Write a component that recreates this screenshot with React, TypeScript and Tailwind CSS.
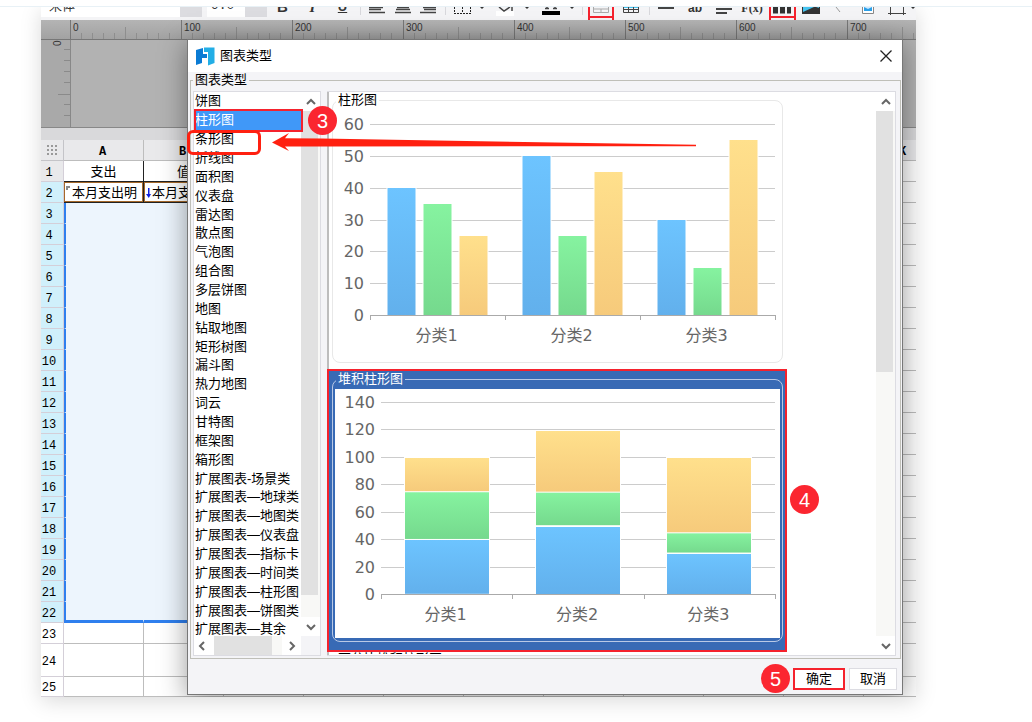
import type { ReactNode } from "react";

const CHART_TYPES = [
  "饼图", "柱形图", "条形图", "折线图", "面积图", "仪表盘", "雷达图", "散点图", "气泡图", "组合图",
  "多层饼图", "地图", "钻取地图", "矩形树图", "漏斗图", "热力地图", "词云", "甘特图", "框架图", "箱形图",
  "扩展图表-场景类", "扩展图表—地球类", "扩展图表—地图类", "扩展图表—仪表盘", "扩展图表—指标卡",
  "扩展图表—时间类", "扩展图表—柱形图", "扩展图表—饼图类", "扩展图表—其余",
];

const COLUMNS = ["A", "B", "C", "D", "E", "F", "G", "H", "I", "J", "K"];
const CATEGORIES = ["分类1", "分类2", "分类3"];
const FILLS = ["url(#blue)", "url(#green)", "url(#yellow)"];
const DATA = [
  [40, 35, 25],
  [50, 25, 45],
  [30, 15, 55],
];

function Tool({ label, className, children }: { label: string; className: string; children: ReactNode }) {
  return (
    <button type="button" aria-label={label} className={`flex h-[13px] shrink-0 items-end justify-center ${className}`}>
      {children}
    </button>
  );
}

function Icon({ w, children }: { w: number; children: ReactNode }) {
  return (
    <svg width={w} height="13" viewBox={`0 0 ${w} 13`} fill="none" stroke="#444" className="shrink-0">
      {children}
    </svg>
  );
}

function Caret() {
  return (
    <Icon w={6}>
      <path d="M1 0h4L3 2z" fill="#333" stroke="none" />
    </Icon>
  );
}

function Separator({ className }: { className: string }) {
  return (
    <span className={`flex h-[13px] shrink-0 justify-center ${className}`}>
      <span className="h-2 w-px bg-[#d8d8dc]" />
    </span>
  );
}

function Toolbar() {
  return (
    <div className="flex h-[13px] items-end overflow-hidden bg-[#f4f4f6] text-[#333]">
      <button type="button" aria-label="字体" className="mb-[3px] flex h-5 shrink-0 text-[13px] leading-[17px]">
        <span className="h-5 w-[139px] bg-white pl-2 text-left">宋体</span>
        <span className="flex h-5 w-[22px] items-center justify-center bg-[#dcdce0]">
          <Caret />
        </span>
      </button>
      <button type="button" aria-label="字号" className="mb-[3px] ml-[5px] flex h-5 shrink-0 font-['Liberation_Mono',monospace] text-[13px] leading-[17px]">
        <span className="h-5 w-[38px] bg-white pl-1 text-left">9.0</span>
        <span className="flex h-5 w-[22px] items-center justify-center bg-[#dcdce0]">
          <Caret />
        </span>
      </button>
      <Tool label="加粗" className="w-[31px]">
        <span className="pb-[5px] text-[15px] leading-4 font-bold">B</span>
      </Tool>
      <Tool label="斜体" className="w-[29px]">
        <span className="pb-[5px] font-['Liberation_Serif',serif] text-[15px] leading-4 font-bold italic">I</span>
      </Tool>
      <Tool label="下划线" className="w-[31px]">
        <span className="pb-[5px] text-[13px] leading-4 font-bold underline">U</span>
      </Tool>
      <Separator className="w-1" />
      <Tool label="左对齐" className="w-[29px]">
        <Icon w={16}><path d="M0 .5h14M0 2.500h12M0 5.500h16" strokeWidth="1.500" /></Icon>
      </Tool>
      <Tool label="居中" className="w-6">
        <Icon w={16}><path d="M2 .5h12M1 2.500h14M0 5.500h16" strokeWidth="1.500" /></Icon>
      </Tool>
      <Tool label="右对齐" className="w-[26px]">
        <Icon w={16}><path d="M3 .5h13M4 2.500h12M0 5.500h16" strokeWidth="1.500" /></Icon>
      </Tool>
      <Separator className="w-[9px]" />
      <Tool label="边框" className="w-[25px]">
        <Icon w={17}>
          <path d="M.5 0v6M8.500 0v6M16.500 0v6M0 6.500h17" stroke="#222" strokeDasharray="2 1" />
        </Icon>
      </Tool>
      <Tool label="边框选项" className="w-[14px]"><Caret /></Tool>
      <Tool label="填充颜色" className="w-8">
        <Icon w={18}>
          <path d="M0 4h18v5H0z" fill="#fff" stroke="none" />
          <path d="M3 0l5 4 6-4M16 0v4" strokeWidth="1.500" />
        </Icon>
      </Tool>
      <Tool label="填充选项" className="w-3"><Caret /></Tool>
      <Tool label="字体颜色" className="w-[35px]">
        <Icon w={18}>
          <path d="M0 4h18v4H0z" fill="#000" stroke="none" />
          <path d="M5 0v2M13 0v2M3 1.500h4M11 1.500h4" strokeWidth="1.500" />
        </Icon>
      </Tool>
      <Tool label="颜色选项" className="w-2"><Caret /></Tool>
      <Separator className="w-3" />
      <Tool label="合并单元格" className="w-[26px] border-x-2 border-[#f5222d]">
        <Icon w={22}>
          <path d="M3.500 0v5.500h15V0M3 2h15M11 2v3" stroke="#aaa" />
          <path d="M0 10h22" stroke="#f5222d" strokeWidth="2" />
        </Icon>
      </Tool>
      <Tool label="表格" className="w-[33px]">
        <Icon w={16}>
          <path d="M1 0h14v1H1z" fill="#45c4f0" stroke="none" />
          <path d="M.5 0v5.500h15V0M0 2.500h16M5.500 0v5M10.500 0v5" />
        </Icon>
      </Tool>
      <Separator className="w-1" />
      <Tool label="分割线" className="w-[29px]">
        <Icon w={16}><path d="M0 1h16" strokeWidth="2" /></Icon>
      </Tool>
      <Tool label="文本" className="w-[30px]">
        <span className="pb-1 text-[12px] leading-4 font-bold">ab</span>
      </Tool>
      <Tool label="段落" className="w-[27px]">
        <Icon w={16}><path d="M0 2h16M0 6h11" strokeWidth="2" /></Icon>
      </Tool>
      <Tool label="公式" className="w-[30px]">
        <span className="pb-1 font-['Liberation_Serif',serif] text-[12px] leading-4 font-bold">F(x)</span>
      </Tool>
      <Tool label="插入图表" className="ml-0.5 w-[27px] border-x-2 border-[#f5222d]">
        <Icon w={23}>
          <path d="M2 0h5v6.500H2zM9 0h5v6.500H9zM16 0h4v6.500h-4z" fill="#333" stroke="none" />
          <path d="M0 10h23" stroke="#f5222d" strokeWidth="2" />
        </Icon>
      </Tool>
      <Tool label="图片" className="w-[30px]">
        <Icon w={18}>
          <path d="M0 0h18v7H0z" fill="#333" stroke="none" />
          <path d="M1 0h11L1 5z" fill="#45c4f0" stroke="none" />
          <path d="M14 0h3v1z" fill="#45c4f0" stroke="none" />
        </Icon>
      </Tool>
      <Tool label="斜线" className="w-[26px]">
        <Icon w={8}><path d="M1 0l4 5" stroke="#999" /></Icon>
      </Tool>
      <Tool label="子报表" className="w-8">
        <Icon w={14}>
          <path d="M1.500 0v6.500h11V0" stroke="#888" fill="#fff" />
          <path d="M3 0h8v4H3z" fill="#2a9fe8" stroke="none" />
          <path d="M3 0l4 2 4-2" fill="#cfeaff" stroke="none" />
        </Icon>
      </Tool>
      <Tool label="悬浮元素" className="w-[26px]">
        <Icon w={18}><path d="M2.500 0v8M15.500 0v8M0 6.500h18" /></Icon>
      </Tool>
      <Tool label="更多" className="w-1.5"><Caret /></Tool>
    </div>
  );
}

function HorizontalRuler() {
  return (
    <div className="flex h-5 overflow-hidden border-b border-[#777] bg-[#ababab] bg-linear-to-b from-[#b4b4b4] to-[#a2a2a2] pl-[29px] text-[10px] leading-[15px] text-[#333]">
      {[0, 100, 200, 300, 400, 500, 600, 700].map((n) => (
        <div key={n} className="relative h-full w-[111px] shrink-0 border-l border-[#777] pl-0.5">
          {n}
          <svg width="111" height="19" className="absolute inset-0" stroke="#8e8e8e">
            {[1, 2, 3, 4, 5, 6, 7, 8, 9].map((t) => (
              <line key={t} x1={t * 11 - 0.5} x2={t * 11 - 0.5} y1={t === 5 ? 7 : 13} y2="19" />
            ))}
          </svg>
        </div>
      ))}
    </div>
  );
}

function Canvas() {
  return (
    <div className="flex h-[88px] border-b border-[#888]">
      <div className="w-[29px] bg-[#a9a9a9]">
        <svg width="29" height="87" stroke="#8a8a8a">
          {[10, 21, 32, 43, 65, 76].map((y) => (
            <line key={y} x1="23" x2="29" y1={y - 0.5} y2={y - 0.5} />
          ))}
          <line x1="17" x2="29" y1="54.500" y2="54.500" />
          <text x="0" y="0" transform="translate(20 6) rotate(-90)" fontSize="10" fill="#333" stroke="none">0</text>
        </svg>
      </div>
      <div className="flex-1 border-l border-[#888] bg-[#b2b2b2]" />
    </div>
  );
}

function rowHeadClass(row: number) {
  if (row === 1) return "bg-[#e9e9eb]";
  if (row <= 22) return "bg-[#d0f0fb]";
  return "bg-white";
}

function cellClass(row: number, col: number) {
  if (col > 1) return "border-[#bdbdbd] bg-white";
  if (row === 1) return "border-[#222] bg-white";
  if (row === 2) return "border-[#222] bg-white shadow-[inset_0_0_0_1px_#a5682a]";
  if (row < 22) return `border-[#edf5fd] bg-[#edf5fd] ${col === 0 ? "border-l-2 border-l-[#2f7fee]" : ""}`;
  if (row === 22) return `border-r-[#edf5fd] border-b-3 border-b-[#2f7fee] bg-[#edf5fd] ${col === 0 ? "border-l-2 border-l-[#2f7fee]" : ""}`;
  return "border-[#bdbdbd] bg-white";
}

function Sheet() {
  const rows = Array.from({ length: 25 }, (_, i) => i + 1);
  return (
    <div className="overflow-hidden">
      <table className="w-[903px] table-fixed border-separate border-spacing-0 text-center text-[13px] leading-4">
        <thead>
          <tr className="h-[21px] bg-[#e9e9eb] font-['Liberation_Mono',monospace] text-[12px]">
            <th className="w-[23px] border-r border-b border-[#c4c4c8] p-0">
              <svg width="13" height="11" className="mx-auto" fill="#999">
                {[0, 4, 8].map((y) => [1, 5, 9].map((x) => <rect key={`${x}-${y}`} x={x} y={y} width="2" height="2" />))}
              </svg>
            </th>
            {COLUMNS.map((c) => (
              <th key={c} className="w-20 border-r border-b border-[#bdbdbd] p-0 pt-1 pr-0.5">{c}</th>
            ))}
          </tr>
        </thead>
        <tbody>
          {rows.map((r) => (
            <tr key={r} className={r === 24 ? "h-[33px]" : r === 25 ? "h-[19px]" : "h-[21px]"}>
              <th className={`border-r border-b border-[#d4cfd8] p-0 pt-[3px] pr-1.5 font-['Liberation_Mono',monospace] text-[12px] font-normal ${rowHeadClass(r)}`}>
                {r}
              </th>
              {COLUMNS.map((c, i) => (
                <td key={c} className={`overflow-hidden border-r border-b p-0 whitespace-nowrap ${cellClass(r, i)} ${r < 3 ? "pt-0.5" : ""}`}>
                  {r === 1 && i === 0 && "支出"}
                  {r === 1 && i === 1 && "值"}
                  {r === 2 && i === 0 && (
                    <span className="flex items-center gap-px pl-px">
                      <svg width="6" height="14" fill="#888"><path d="M1 0h4v2H3v2H1z" /></svg>
                      本月支出明
                    </span>
                  )}
                  {r === 2 && i === 1 && (
                    <span className="flex items-center pl-0.5">
                      <svg width="6" height="14" fill="#1020e0"><path d="M2 2h1.500v6H5l-2.200 4L0 8h2z" /></svg>
                      本月支出明
                    </span>
                  )}
                </td>
              ))}
            </tr>
          ))}
        </tbody>
      </table>
    </div>
  );
}

function Arrow({ d }: { d: string }) {
  return (
    <svg width="10" height="10" viewBox="0 0 10 10" fill="none" stroke="#666" strokeWidth="2">
      <path d={d} />
    </svg>
  );
}

const UP = "M1 7l4-4 4 4";
const DOWN = "M1 3l4 4 4-4";
const LEFT = "M7 1L3 5l4 4";
const RIGHT = "M3 1l4 4-4 4";

function VerticalScroll({ thumb }: { thumb: string }) {
  return (
    <div className="flex w-[19px] shrink-0 flex-col bg-[#f8f8f6]">
      <button type="button" aria-label="向上" className="flex h-[19px] shrink-0 items-center justify-center bg-white"><Arrow d={UP} /></button>
      <div className={`mr-0.5 bg-[#e1e1e1] ${thumb}`} />
      <button type="button" aria-label="向下" className="mt-auto flex h-[19px] shrink-0 items-center justify-center bg-white"><Arrow d={DOWN} /></button>
    </div>
  );
}

function TypeList() {
  return (
    <div className="flex w-32 shrink-0 flex-col border border-[#dcdce2] bg-white">
      <div className="flex h-[544px] overflow-hidden">
        <ul role="listbox" aria-label="图表类型" className="flex h-[547px] w-[107px] flex-col overflow-hidden text-[13px] leading-4">
          {CHART_TYPES.map((name) => {
            const on = name === "柱形图";
            return (
              <li
                key={name}
                role="option"
                aria-selected={on}
                className={`flex flex-1 items-center pl-px whitespace-nowrap ${on ? "bg-[#4098f8] text-white" : "text-black"}`}
              >
                {name}
              </li>
            );
          })}
        </ul>
        <VerticalScroll thumb="h-[484px]" />
      </div>
      <div className="flex flex-1 bg-[#f4f4f7]">
        <button type="button" aria-label="向左" className="flex w-5 items-center justify-center bg-white pr-1"><Arrow d={LEFT} /></button>
        <div className="w-[58px] bg-[#e1e1e1]" />
        <div className="w-2.5 bg-[#f8f8f6]" />
        <button type="button" aria-label="向右" className="flex w-[19px] items-center justify-center bg-white"><Arrow d={RIGHT} /></button>
      </div>
    </div>
  );
}

interface Bar {
  x: number;
  y: number;
  w: number;
  h: number;
  fill: string;
}

function Plot({ left, top, base, ticks, bars }: { left: number; top: number; base: number; ticks: number[]; bars: Bar[] }) {
  const right = 440;
  const step = (base - top) / (ticks.length - 1);
  const span = (right - left) / 3;
  return (
    <svg width="445" height="249" viewBox="0 0 445 249" className="block bg-white font-['DejaVu_Sans','Noto_Sans_CJK_SC',sans-serif]" fontSize="16" fill="#666">
      <defs>
        <linearGradient id="blue" x1="0" y1="0" x2="0" y2="1"><stop stopColor="#6dc4ff" /><stop offset="1" stopColor="#62b0ec" /></linearGradient>
        <linearGradient id="green" x1="0" y1="0" x2="0" y2="1"><stop stopColor="#86f3a0" /><stop offset="1" stopColor="#75d98d" /></linearGradient>
        <linearGradient id="yellow" x1="0" y1="0" x2="0" y2="1"><stop stopColor="#ffe08c" /><stop offset="1" stopColor="#f6ca7b" /></linearGradient>
      </defs>
      {ticks.map((t, i) => {
        const y = Math.round(base - i * step) + 0.5;
        return (
          <g key={t}>
            <line x1={left} x2={right} y1={y} y2={y} stroke={i === 0 ? "#aaa" : "#ccc"} />
            <text x={left - 6} y={y + 5} textAnchor="end">{t}</text>
          </g>
        );
      })}
      {bars.map((b, i) => (
        <rect key={i} x={b.x} y={b.y} width={b.w} height={b.h} fill={b.fill} stroke="#fff" />
      ))}
      <path
        d={`M${left} ${base + 0.5}H${right + 1}M${left + 0.5} ${base}v5M${Math.round(left + span) + 0.5} ${base}v5M${Math.round(left + span * 2) + 0.5} ${base}v5M${right + 0.5} ${base}v5`}
        stroke="#aaa"
        fill="none"
      />
      {CATEGORIES.map((c, i) => (
        <text key={c} x={left + span * (i + 0.5) - 1} y={base + 26} textAnchor="middle">{c}</text>
      ))}
    </svg>
  );
}

function ColumnPlot() {
  const xs = [[52, 88, 124], [187, 223, 259], [322, 358, 394]];
  const bars = DATA.flatMap((group, g) =>
    group.map((v, s) => {
      const h = v * 3.2;
      return { x: xs[g][s], y: 205.5 - h, w: 29, h, fill: FILLS[s] };
    }),
  );
  return <Plot left={35} top={14} base={205} ticks={[0, 10, 20, 30, 40, 50, 60]} bars={bars} />;
}

function StackedPlot() {
  const xs = [69.5, 200.5, 331.5];
  const bars = DATA.flatMap((group, g) => {
    let sum = 0;
    return group.map((v, s) => {
      sum += v;
      return { x: xs[g], y: Math.round(205 - sum * 1.370) + 0.5, w: 85, h: v * 1.370, fill: FILLS[s] };
    });
  });
  return <Plot left={46} top={13} base={205} ticks={[0, 20, 40, 60, 80, 100, 120, 140]} bars={bars} />;
}

function PreviewCard({ title, className, children }: { title: string; className: string; children: ReactNode }) {
  return (
    <fieldset className={`w-[451px] rounded-lg border px-0.5 pt-0.5 pb-[3px] ${className}`}>
      <legend className="ml-px px-0.5 text-[13px] leading-4">{title}</legend>
      {children}
    </fieldset>
  );
}

function Previews() {
  return (
    <div className="flex min-w-0 flex-1 border-y border-r border-[#dcdce2] bg-white shadow-[inset_2px_0_0_#bdbdbd]">
      <div className="h-[562px] flex-1 overflow-hidden">
        <div className="pb-1.5 pl-[5px]">
          <PreviewCard title="柱形图" className="border-[#e8e8e8] text-black"><ColumnPlot /></PreviewCard>
        </div>
        <div className="w-[460px] border-2 border-[#f5222d] bg-[#386ab5] pb-2 pl-[3px]">
          <PreviewCard title="堆积柱形图" className="border-[#b9c9e6] text-white"><StackedPlot /></PreviewCard>
        </div>
        <div className="-mt-px pl-[5px]">
          <PreviewCard title="百分比堆积柱形图" className="border-[#e8e8e8] text-black">{null}</PreviewCard>
        </div>
      </div>
      <VerticalScroll thumb="h-[261px]" />
    </div>
  );
}

function Badge({ n }: { n: number }) {
  return (
    <span className="flex size-[29px] items-center justify-center rounded-full bg-[#fb2630] text-[20px] leading-none text-white">{n}</span>
  );
}

function ChartDialog() {
  return (
    <div role="dialog" aria-label="图表类型" className="absolute top-8 right-[13px] bottom-0.5 left-[146px] flex flex-col border border-[#777] bg-[#f4f4f7] shadow-[0_4px_26px_rgba(0,0,0,0.4)]">
      <div className="flex h-8 shrink-0 items-center bg-white pr-2.5 pl-2">
        <svg width="19" height="19" viewBox="0 0 19 19">
          <path d="M0 3l7-2v6h4v4H6v5l-6 2z" fill="#0a7bd4" />
          <path d="M8 .5h10.500V16L12 18.500V5H8z" fill="#22aee6" />
        </svg>
        <h1 className="ml-[5px] flex-1 text-[13px] leading-4 text-black">图表类型</h1>
        <button type="button" aria-label="关闭">
          <svg width="12" height="12" stroke="#222" strokeWidth="1.300"><path d="M.5.5l11 11M11.500.5l-11 11" /></svg>
        </button>
      </div>
      <fieldset className="mr-px ml-0.5 flex min-h-0 min-w-0 flex-1 gap-1.5 border border-[#bfbfb8] pt-[3px] pr-1 pb-0.5 pl-0.5">
        <legend className="px-0.5 text-[13px] leading-4 text-black">图表类型</legend>
        <TypeList />
        <Previews />
      </fieldset>
      <div className="flex h-[35px] shrink-0 items-center justify-end pt-1 pr-[5px] text-[13px] leading-4 text-black">
        <Badge n={5} />
        <button type="button" className="ml-[3px] h-[22px] w-[52px] border-2 border-[#f5222d] bg-white">确定</button>
        <button type="button" className="ml-1 h-[22px] w-12 border border-[#dcdce2] bg-white">取消</button>
      </div>

      <div className="absolute top-[69px] left-1.5 h-[23px] w-[109px] border-2 border-[#f5222d]" />
      <div className="absolute top-[90px] -left-px h-[25px] w-[74px] rounded-md border-3 border-[#ff2010]" />
      <div className="absolute top-[66px] left-[120px]"><Badge n={3} /></div>
      <div className="absolute top-[445px] left-[602px]"><Badge n={4} /></div>
      <svg width="424" height="20" viewBox="0 0 424 20" className="absolute top-[92px] left-[84px]">
        <path d="M0 10.500L17 1l-4 5.200 36 .3L424 12.800v1.400L49 14.500H13l4 4.500z" fill="#ff2010" />
      </svg>
    </div>
  );
}

export default function App() {
  return (
    <div className="min-h-[722px] bg-white font-['Liberation_Sans','Noto_Sans_CJK_SC',sans-serif]">
      <div className="h-[7px] border-b border-[#e8f1f6]" />
      <main className="overflow-hidden pr-[116px] pb-[26px] pl-[41px]">
        <div className="relative shadow-[0_4px_20px_rgba(0,0,0,0.15)]">
          <div className="overflow-hidden">
            <Toolbar />
            <HorizontalRuler />
            <Canvas />
            <div className="h-3 bg-[#d9d9db]" />
            <Sheet />
          </div>
          <div className="absolute inset-0 overflow-hidden">
            <ChartDialog />
          </div>
        </div>
      </main>
    </div>
  );
}
